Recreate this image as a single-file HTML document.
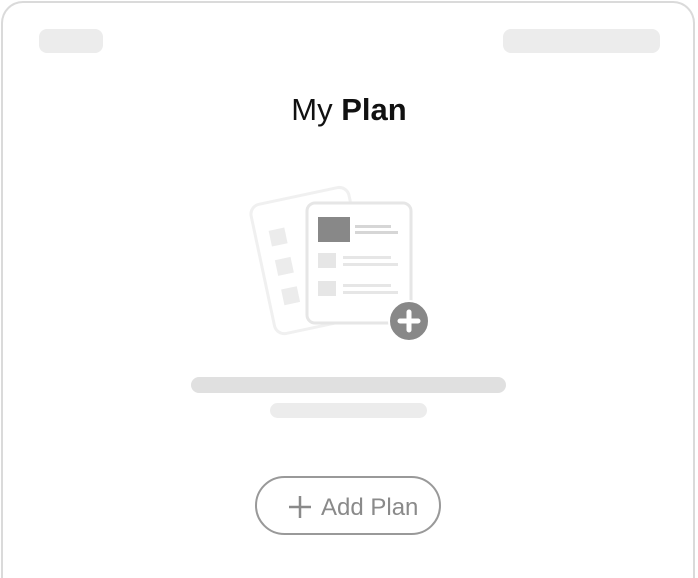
<!DOCTYPE html>
<html><head><style>
html,body{margin:0;padding:0;background:#fff;width:698px;height:578px;overflow:hidden;font-family:"Liberation Sans",sans-serif}
.wrap{position:absolute;left:0;top:0;width:698px;height:578px;overflow:hidden}
.card{position:absolute;left:1px;top:1px;width:694px;height:577px;border:2px solid #dadada;border-bottom:none;border-radius:22px 22px 0 0;box-sizing:border-box}
.pill{position:absolute;background:#ececec;border-radius:8px}
.title{position:absolute;left:0;width:698px;top:92px;text-align:center;font-size:31px;color:#111}
.btn{position:absolute;left:255px;top:476px;width:186px;height:59px;border:2px solid #999;border-radius:30px;box-sizing:border-box;color:#8a8a8a;font-size:23px}
</style></head><body>
<div class="wrap">
<div class="card"></div>
<div class="pill" style="left:39px;top:29px;width:64px;height:24px"></div>
<div class="pill" style="left:503px;top:29px;width:157px;height:24px"></div>
<div class="title">My <b>Plan</b></div>
<svg style="position:absolute;left:240px;top:170px" width="200" height="180">
<g transform="rotate(-12 85 100)">
<rect x="24" y="22" width="100" height="132" rx="10" fill="#fff" stroke="#f0f0f0" stroke-width="3"/>
<rect x="38" y="50" width="16" height="16" fill="#ececec"/>
<rect x="38" y="80" width="16" height="16" fill="#ececec"/>
<rect x="38" y="110" width="16" height="16" fill="#ececec"/>
</g>
<rect x="67" y="33" width="104" height="120" rx="8" fill="#fff" stroke="#e6e6e6" stroke-width="3"/>
<rect x="78" y="47" width="32" height="25" fill="#888"/>
<rect x="115" y="55" width="36" height="3" fill="#d6d6d6"/>
<rect x="115" y="61" width="43" height="3" fill="#d6d6d6"/>
<rect x="78" y="83" width="18" height="15" fill="#e6e6e6"/>
<rect x="103" y="86" width="48" height="3" fill="#e6e6e6"/>
<rect x="103" y="93" width="55" height="3" fill="#e6e6e6"/>
<rect x="78" y="111" width="18" height="15" fill="#e6e6e6"/>
<rect x="103" y="114" width="48" height="3" fill="#e6e6e6"/>
<rect x="103" y="121" width="55" height="3" fill="#e6e6e6"/>
<circle cx="169" cy="151" r="20" fill="#888" stroke="#fff" stroke-width="2"/>
<path d="M169 142v18M160 151h18" stroke="#fff" stroke-width="5" stroke-linecap="round"/>
</svg>
<div class="pill" style="left:191px;top:377px;width:315px;height:16px;background:#e0e0e0"></div>
<div class="pill" style="left:270px;top:403px;width:157px;height:15px"></div>
<div class="btn">
<svg style="position:absolute;left:31px;top:17px" width="24" height="24"><path d="M12 1v22M1 12h22" stroke="#8a8a8a" stroke-width="2.5"/></svg>
<span style="position:absolute;left:64px;top:16px;font-size:24px;line-height:28px">Add Plan</span>
</div>
</div>
</body></html>
